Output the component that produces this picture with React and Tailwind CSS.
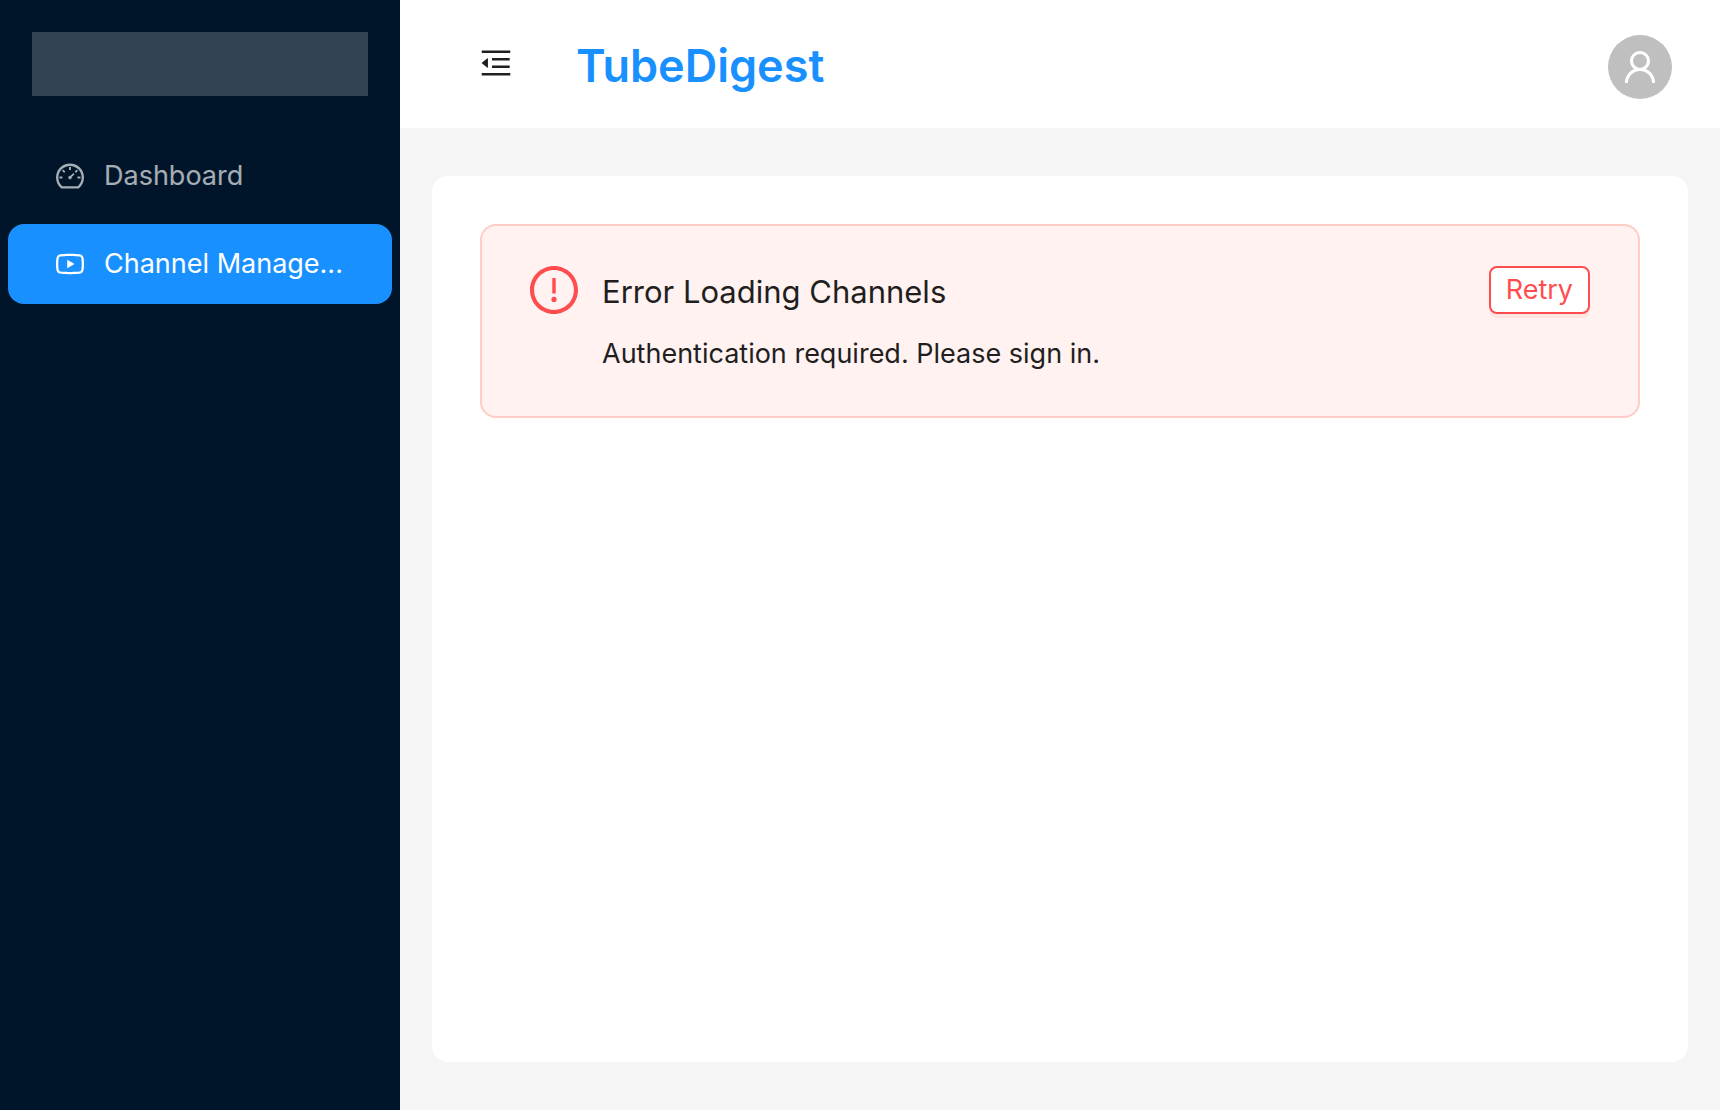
import {
  AiOutlineDashboard,
  AiOutlineExclamationCircle,
  AiOutlineMenuFold,
  AiOutlineUser,
  AiOutlineYoutube,
} from "react-icons/ai";

// Trims the icon set's built-in margin so glyphs fill their box.
const TIGHT = "64 64 896 896";

const menu = [
  { label: "Dashboard", title: "Dashboard", icon: AiOutlineDashboard, active: false },
  { label: "Channel Manage...", title: "Channel Management", icon: AiOutlineYoutube, active: true },
];

function Sidebar() {
  return (
    <aside className="w-[400px] shrink-0 bg-[#001529]">
      <div className="m-8 h-16 bg-white/20" />
      <nav className="flex flex-col gap-2 px-2 pt-2">
        {menu.map(({ label, title, icon: Icon, active }) => (
          <a
            key={label}
            href="#"
            title={title}
            aria-current={active ? "page" : undefined}
            className={
              "flex h-20 items-center gap-5 rounded-2xl pr-10 pl-12 text-[27px] " +
              (active ? "bg-[#1890ff] text-white" : "text-white/65")
            }
          >
            <Icon viewBox={TIGHT} className="size-7 shrink-0" />
            <span className="whitespace-nowrap">{label}</span>
          </a>
        ))}
      </nav>
    </aside>
  );
}

function Header() {
  return (
    <header className="flex h-32 items-center bg-white pr-12 pl-8">
      <button
        type="button"
        aria-label="Collapse menu"
        className="flex h-32 w-32 items-center justify-center pb-[2px]"
      >
        <AiOutlineMenuFold viewBox={TIGHT} className="size-8" />
      </button>
      <h1 className="mt-1 ml-4 text-[45px] leading-[64px] font-semibold text-[#1890ff]">TubeDigest</h1>
      <button
        type="button"
        aria-label="Account"
        className="mt-[6px] ml-auto flex size-16 items-center justify-center rounded-full bg-[#bfbfbf] text-white"
      >
        <AiOutlineUser viewBox={TIGHT} className="size-9" />
      </button>
    </header>
  );
}

function ErrorAlert() {
  return (
    <div
      role="alert"
      className="flex items-start gap-6 rounded-2xl border-2 border-[#ffccc7] bg-[#fff2f0] px-12 py-10"
    >
      <AiOutlineExclamationCircle viewBox={TIGHT} className="size-12 shrink-0 text-[#ff4d4f]" />
      <div className="min-w-0 flex-1">
        <h2 className="mb-[14px] text-[31px] leading-[52px]">Error Loading Channels</h2>
        <p className="text-[27px] leading-[44px]">Authentication required. Please sign in.</p>
      </div>
      <button
        type="button"
        className="h-12 rounded-lg border-2 border-[#ff4d4f] bg-white px-[15px] text-[27px] leading-[44px] text-[#ff4d4f] shadow-[0_4px_0_rgba(255,38,5,0.06)]"
      >
        Retry
      </button>
    </div>
  );
}

export default function App() {
  return (
    <div className="flex min-h-screen bg-[#f5f5f5] font-[Inter,sans-serif] text-[#1f1f1f]">
      <Sidebar />
      <div className="flex min-w-0 flex-1 flex-col">
        <Header />
        <main className="mx-8 my-12 flex-1 rounded-2xl bg-white p-12">
          <ErrorAlert />
        </main>
      </div>
    </div>
  );
}
